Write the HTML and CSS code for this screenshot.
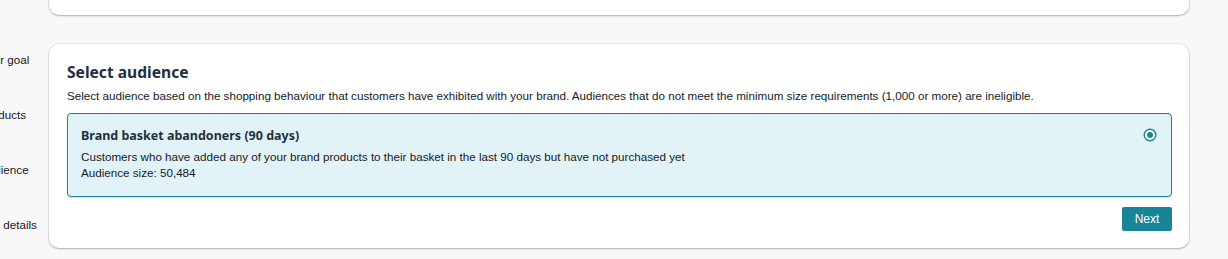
FILE: index.html
```html
<!DOCTYPE html>
<html lang="en">
<head>
  <meta charset="UTF-8">
  <title>Select audience</title>
  <link rel="stylesheet" href="styles.css">
</head>
<body>
<div class="page">
	<ul class="steps">
		<li>Choose your goal</li>
		<li>Choose products</li>
		<li>Choose audience</li>
		<li>Campaign details</li>
	</ul>
	<div class="main">
		<div class="card card-prev"></div>
		<div class="card">
			<h2>Select audience</h2>
			<p class="lead">Select audience based on the shopping behaviour that customers have exhibited with your brand. Audiences that do not meet the minimum size requirements (1,000 or more) are ineligible.</p>
			<label class="option">
				<div class="option-text">
					<div class="option-title">Brand basket abandoners (90 days)</div>
					<div>Customers who have added any of your brand products to their basket in the last 90 days but have not purchased yet</div>
					<div>Audience size: 50,484</div>
				</div>
				<svg class="radio" width="14" height="14" viewBox="0 0 14 14">
					<circle cx="7" cy="7" r="5.8" fill="#fff" stroke="#1a8597" stroke-width="1.4"/>
					<circle cx="7" cy="7" r="3" fill="#1a8597"/>
				</svg>
			</label>
			<div class="actions">
				<button class="btn">Next</button>
			</div>
		</div>
	</div>
</div>
</body>
</html>
```

FILE: styles.css
```css
body {
	margin: 0;
	background: #f8f8f8;
	font-family: "Liberation Sans", Arial, sans-serif;
	font-size: 11.65px;
	color: #16191f;
	overflow: hidden;
}
.page {
	display: flex;
	align-items: flex-start;
}
.steps {
	list-style: none;
	margin: 0;
	padding: 52px 0 0 0;
	width: 38px;
	flex: none;
	overflow: hidden;
}
.steps li {
	margin-left: -62px;
	white-space: nowrap;
	height: 55px;
	line-height: 16px;
}
/* last step label sits a little further in */
.steps li:last-child {
	margin-left: -53px;
}
.main {
	margin-left: 11px;
	width: 1140px;
}
.card {
	background: #fff;
	border-radius: 10px;
	box-shadow: 0 1px 2px rgba(0, 0, 0, 0.25), 0 0 0 1px rgba(0, 0, 0, 0.06);
	padding: 17px 17px 17px 18px;
}
.card-prev {
	margin-top: -40px;
	height: 55px;
	padding: 0;
	margin-bottom: 29px;
}
h2 {
	margin: 0;
	font-family: "Noto Sans", sans-serif;
	font-size: 15.6px;
	line-height: 22px;
	font-weight: 700;
	color: #232f3e;
}
.lead {
	margin: 5px 0 9px;
	line-height: 16px;
}
.option {
	display: flex;
	justify-content: space-between;
	align-items: flex-start;
	background: #e2f3f8;
	border: 1px solid #1a8597;
	border-radius: 4px;
	padding: 13px 14px 15px 13px;
	box-shadow: 0 1px 1px rgba(0, 0, 0, 0.12);
}
.option-text {
	line-height: 16px;
}
.option-title {
	font-family: "Noto Sans", sans-serif;
	font-weight: 700;
	font-size: 12.5px;
	color: #232f3e;
	line-height: 18px;
	margin-bottom: 4px;
}
.radio {
	margin-top: 1px;
}
.actions {
	display: flex;
	justify-content: flex-end;
	margin-top: 10px;
}
.btn {
	background: #178597;
	color: #fff;
	border: 0;
	border-radius: 2px;
	font-family: "Liberation Sans", Arial, sans-serif;
	font-size: 12px;
	width: 50px;
	height: 24px;
	padding: 0;
}
```
